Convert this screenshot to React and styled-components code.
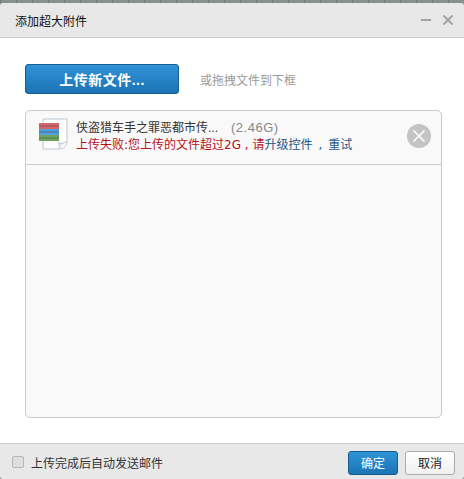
import React from "react"
import styled, { createGlobalStyle } from "styled-components"

const GlobalStyle = createGlobalStyle`
  html, body {
    margin: 0;
    padding: 0;
    background: #7f8a8c;
  }
  body {
    font-family: "Liberation Sans", "Noto Sans CJK SC", sans-serif;
    font-size: 12px;
  }
`

const Dialog = styled.div`
  width: 464px;
  height: 479px;
  display: flex;
  flex-direction: column;
  overflow: hidden;
  background: #7f8a8c;
`

const TopStrip = styled.div`
  height: 3px;
  flex: none;
  background: repeating-linear-gradient(90deg, #6f7b7d 0 1px, #87928f 1px 16px);
`

const Header = styled.div`
  height: 35px;
  flex: none;
  box-sizing: border-box;
  display: flex;
  align-items: center;
  padding: 0 5px 0 15px;
  background: #e8e8e8;
  border-bottom: 1px solid #c9c9c9;
  border-radius: 3px 3px 0 0;
`

const Title = styled.div`
  flex: 1;
  font-size: 12px;
  color: #111;
`

const WindowButton = styled.button`
  width: 22px;
  height: 22px;
  padding: 0;
  border: 0;
  background: none;
  display: flex;
  align-items: center;
  justify-content: center;
`

const Body = styled.div`
  flex: 1;
  display: flex;
  flex-direction: column;
  padding: 26px 22px 25px 25px;
  background: #fff;
`

const UploadRow = styled.div`
  display: flex;
  align-items: center;
  height: 30px;
  margin-bottom: 16px;
`

const UploadButton = styled.button`
  width: 154px;
  height: 30px;
  box-sizing: border-box;
  padding: 0;
  border: 1px solid #155d8c;
  border-radius: 3px;
  background: linear-gradient(#2f93d8, #1c74b4);
  color: #fff;
  font-family: inherit;
  font-size: 14px;
  font-weight: bold;
  letter-spacing: 0.5px;
`

const DropHint = styled.span`
  margin-left: 21px;
  color: #999;
  font-size: 12px;
`

const FileList = styled.div`
  flex: 1;
  border: 1px solid #ccc;
  border-radius: 5px;
  background: #f9f9f9;
`

const FileRow = styled.div`
  height: 54px;
  box-sizing: border-box;
  display: flex;
  align-items: center;
  padding: 0 10px 0 11px;
  border-bottom: 1px solid #ccc;
`

const FileIcon = styled.svg`
  flex: none;
  width: 32px;
  height: 34px;
  margin-right: 7px;
  margin-top: -5px;
`

const FileInfo = styled.div`
  flex: 1;
  line-height: 17px;
  margin-top: -3px;
`

const FileName = styled.div`
  color: #333;
  font-size: 12px;
`

const FileSize = styled.span`
  margin-left: 13px;
  color: #888;
  font-size: 13px;
  letter-spacing: 0.5px;
`

const FileError = styled.div`
  color: #b3111c;
  font-family: "DejaVu Sans", "Noto Sans CJK SC", sans-serif;
  font-size: 12px;
`

const ActionLink = styled.a`
  color: #1d5587;
`

const Separator = styled.span`
  margin: 0 6px;
  color: #1d5587;
`

const RemoveButton = styled.button`
  flex: none;
  width: 24px;
  height: 24px;
  margin-top: -3px;
  padding: 0;
  border: 0;
  border-radius: 50%;
  background: #c4c4c4;
  display: flex;
  align-items: center;
  justify-content: center;
`

const Footer = styled.div`
  height: 36px;
  flex: none;
  box-sizing: border-box;
  display: flex;
  align-items: center;
  padding: 2px 9px 0 12px;
  background: #e8e8e8;
  border-top: 1px solid #ccc;
  border-radius: 0 0 3px 3px;
`

const AutoSend = styled.label`
  flex: 1;
  display: flex;
  align-items: center;
  margin-top: -1px;
  color: #333;
  font-size: 12px;
`

const CheckBox = styled.span`
  width: 10px;
  height: 10px;
  margin-right: 7px;
  border: 1px solid #b5b5b5;
  border-radius: 2px;
  background: #dedede;
`

const FooterButton = styled.button`
  width: 50px;
  height: 24px;
  box-sizing: border-box;
  margin-left: 7px;
  padding: 0;
  border-radius: 3px;
  font-family: inherit;
  font-size: 12px;
  border: 1px solid ${(p) => (p.$primary ? "#155d8c" : "#aaa")};
  background: ${(p) => (p.$primary ? "linear-gradient(#2f93d8, #1c74b4)" : "linear-gradient(#fff, #f0f0f0)")};
  color: ${(p) => (p.$primary ? "#fff" : "#222")};
`

const Archive = () => (
  <FileIcon viewBox="0 0 32 34">
    <path d="M6 1H30V23C30 27 27 31 22 31H6Z" fill="#fff" stroke="#bcc6ce" />
    <path d="M22 31C23 28 22 26 21 25C25 26 28 25 30 23" fill="#e6ebef" stroke="#bcc6ce" />
    <rect x="2" y="5" width="20" height="6" fill="#d9646a" />
    <rect x="2" y="11" width="20" height="6" fill="#4f9fdc" />
    <rect x="2" y="17" width="20" height="6" fill="#6da55f" />
    <path d="M2 8H22M2 14H22M2 20H22" stroke="#3c4650" strokeOpacity=".5" />
  </FileIcon>
)

export default function App() {
  return (
    <>
      <GlobalStyle />
      <Dialog>
        <TopStrip />
        <Header>
          <Title>添加超大附件</Title>
          <WindowButton aria-label="最小化">
            <svg width="12" height="12" viewBox="0 0 12 12">
              <path d="M1 6H11" stroke="#a3a3a3" strokeWidth="2" />
            </svg>
          </WindowButton>
          <WindowButton aria-label="关闭">
            <svg width="12" height="12" viewBox="0 0 12 12">
              <path d="M1.5 1.5L10.5 10.5M10.5 1.5L1.5 10.5" stroke="#a3a3a3" strokeWidth="2" />
            </svg>
          </WindowButton>
        </Header>
        <Body>
          <UploadRow>
            <UploadButton>上传新文件...</UploadButton>
            <DropHint>或拖拽文件到下框</DropHint>
          </UploadRow>
          <FileList>
            <FileRow>
              <Archive />
              <FileInfo>
                <FileName>
                  侠盗猎车手之罪恶都市传...
                  <FileSize>(2.46G)</FileSize>
                </FileName>
                <FileError>
                  上传失败:您上传的文件超过2G , 请<ActionLink>升级控件</ActionLink>
                  <Separator>,</Separator>
                  <ActionLink>重试</ActionLink>
                </FileError>
              </FileInfo>
              <RemoveButton aria-label="移除">
                <svg width="16" height="16" viewBox="0 0 16 16">
                  <path d="M2.5 2.5L13.5 13.5M13.5 2.5L2.5 13.5" stroke="#fff" strokeWidth="1.6" />
                </svg>
              </RemoveButton>
            </FileRow>
          </FileList>
        </Body>
        <Footer>
          <AutoSend>
            <CheckBox />
            上传完成后自动发送邮件
          </AutoSend>
          <FooterButton $primary>确定</FooterButton>
          <FooterButton>取消</FooterButton>
        </Footer>
      </Dialog>
    </>
  )
}
